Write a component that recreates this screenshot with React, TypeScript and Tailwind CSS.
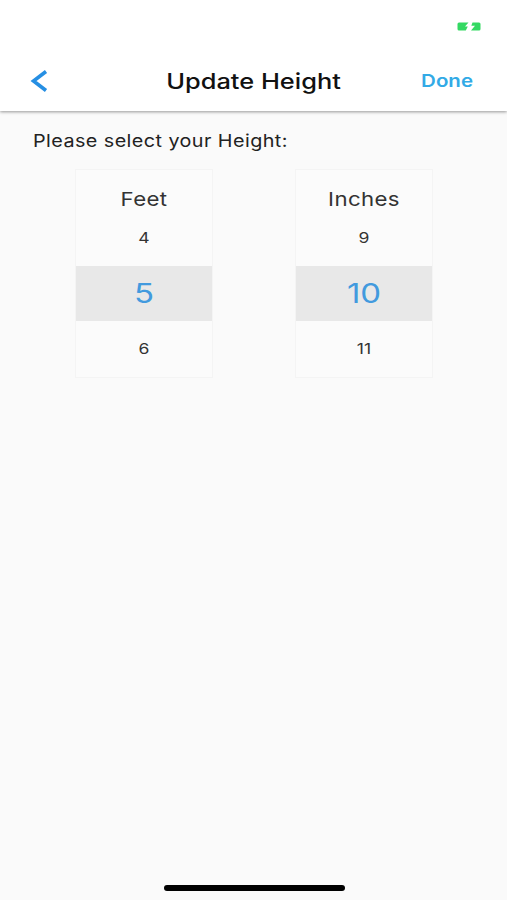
import clsx from "clsx";

type PickerProps = {
  label: string;
  values: [string, string, string];
};

function Picker({ label, values }: PickerProps) {
  const [prev, current, next] = values;

  return (
    <section className="flex h-[209px] w-[138px] flex-col border border-[#f4f4f4] bg-[#fbfbfb] text-center text-[#333]">
      <h2 className="mt-[18px] h-6 scale-x-[1.17] text-[19px] leading-6 tracking-[0.3px]">
        {label}
      </h2>
      <button className="mt-4 h-5 scale-x-[1.17] text-[15px] leading-5">{prev}</button>
      <div className="mt-[18px] h-[55px] bg-[#e8e8e8]">
        <div className="scale-x-[1.22] text-[27px] leading-[55px] text-[#429ade]">
          {current}
        </div>
      </div>
      <button className="mt-[18px] h-5 scale-x-[1.17] text-[15px] leading-5">{next}</button>
    </section>
  );
}

function Battery({ className }: { className?: string }) {
  return (
    <svg className={clsx("h-[9px] w-6", className)} viewBox="0 0 24 9" fill="#34d963">
      <path d="M2 0.5H11.5L8 4.4H10.8L8.8 8.5H2Q0.5 8.5 0.5 7V2Q0.5 0.5 2 0.5Z" />
      <path d="M15.5 0.5H22Q23.5 0.5 23.5 2V7Q23.5 8.5 22 8.5H14L18 3.7H14.3Z" />
    </svg>
  );
}

export default function App() {
  return (
    <div className="flex h-[900px] w-[507px] flex-col overflow-hidden bg-[#fafafa] font-['Inter',sans-serif]">
      <header className="z-10 h-[111px] shrink-0 bg-white shadow-[0_1px_3px_rgba(0,0,0,0.4)]">
        <div className="flex h-[50px] justify-end pt-[22px] pr-[26px]">
          <Battery />
        </div>
        <div className="grid h-[61px] grid-cols-[120px_1fr_120px] items-center">
          <button aria-label="Back" className="ml-[30px] w-5">
            <svg className="h-6 w-5" viewBox="0 0 20 24" fill="none" stroke="#268fe3" strokeWidth="3.6">
              <path d="M16 2.5L3.5 12L16 21.5" />
            </svg>
          </button>
          <h1 className="scale-x-[1.21] pt-[2px] text-center text-[21px] font-medium whitespace-nowrap text-[#111]">
            Update Height
          </h1>
          <button className="mr-[34px] origin-right scale-x-[1.17] pt-[2px] text-right text-[17.5px] font-semibold text-[#32aae6]">
            Done
          </button>
        </div>
      </header>

      <main className="flex-1">
        <p className="mt-[18px] ml-[33px] w-max origin-left scale-x-[1.13] text-[17.5px] leading-6 tracking-[0.38px] text-[#222]">
          Please select your Height:
        </p>
        <div className="mt-4 ml-[75px] flex gap-[82px]">
          <Picker label="Feet" values={["4", "5", "6"]} />
          <Picker label="Inches" values={["9", "10", "11"]} />
        </div>
      </main>

      <footer className="flex h-[15px] justify-center pl-px">
        <div className="h-[6px] w-[181px] rounded-full bg-black" />
      </footer>
    </div>
  );
}
